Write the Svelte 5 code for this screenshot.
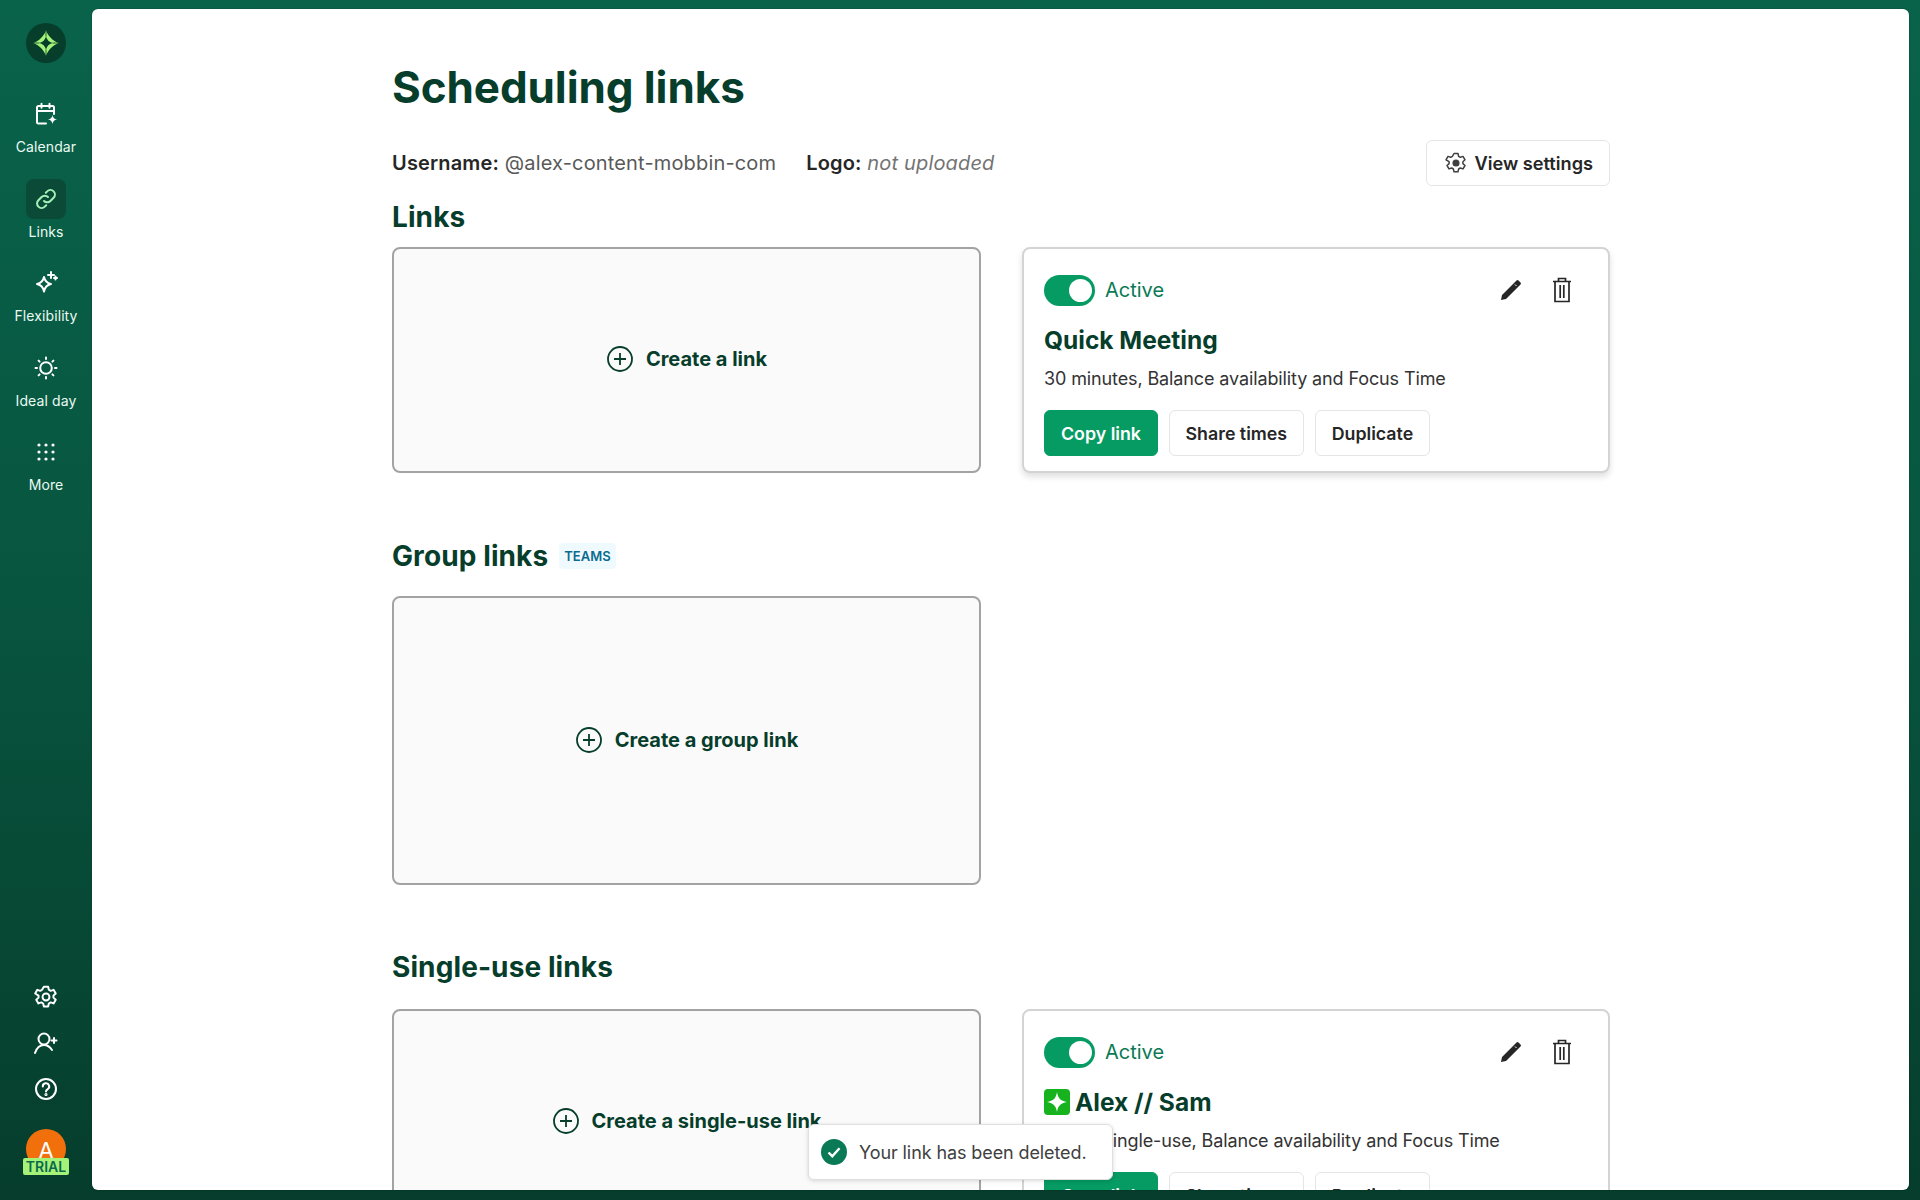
<script>
  const nav = [
    { label: 'Calendar', icon: 'cal' },
    { label: 'Links', icon: 'link', active: true },
    { label: 'Flexibility', icon: 'flex' },
    { label: 'Ideal day', icon: 'sun' },
    { label: 'More', icon: 'more' }
  ];
</script>

{#snippet toggle()}
  <span class="toggle"><span class="knob"></span></span>
{/snippet}

{#snippet pencil()}
  <svg width="24" height="24" viewBox="0 0 24 24" fill="#262626"><path d="M2 22l1-5L17.500 2.500a1.400 1.400 0 0 1 2 0l2 2a1.400 1.400 0 0 1 0 2L7 21z"/><path d="M16 6.500l1.500 1.500" stroke="#fff" stroke-width="1"/></svg>
{/snippet}

{#snippet trash()}
  <svg width="24" height="26" viewBox="0 0 24 26" fill="none" stroke="#262626" stroke-width="1.700"><path d="M3 4.500h18M8.500 4.500V1.500h7v3M5 4.500v20h14v-20M10.200 8v13M13.800 8v13"/></svg>
{/snippet}

{#snippet plus()}
  <svg width="28" height="28" viewBox="0 0 28 28" fill="none" stroke="#063d2b" stroke-width="1.800"><circle cx="14" cy="14" r="12"/><path d="M14 8v12M8 14h12"/></svg>
{/snippet}

{#snippet cardHead()}
  <div class="head">
    <div class="status">{@render toggle()}<span>Active</span></div>
    <div class="tools">{@render pencil()}{@render trash()}</div>
  </div>
{/snippet}

{#snippet actions()}
  <div class="actions">
    <button class="btn primary">Copy link</button>
    <button class="btn">Share times</button>
    <button class="btn">Duplicate</button>
  </div>
{/snippet}

<div class="shell">
  <aside class="side">
    <div class="logo">
      <svg width="30" height="30" viewBox="0 0 30 30">
        <path d="M15 2.200C17 8 22 13 27.800 15 22 17 17 22 15 27.800 13 22 8 17 2.200 15 8 13 13 8 15 2.200z" fill="#a5f278"/>
        <path d="M15 8.500C16 12 18 14 21.500 15 18 16 16 18 15 21.500 14 18 12 16 8.500 15 12 14 14 12 15 8.500z" fill="#063d2b"/>
        <path d="M15 2.200V8.500M15 21.500v6.300M2.200 15H8.500M21.500 15h6.300" stroke="#063d2b" stroke-width=".8"/>
      </svg>
    </div>
    <nav class="nav">
      {#each nav as item}
        <div class="nav-item">
          <div class="nav-icon" class:active={item.active}>
            {#if item.icon === 'cal'}
              <svg width="26" height="26" viewBox="0 0 26 26" fill="none" stroke="#fff" stroke-width="2" stroke-linecap="round"><path d="M13 22.500H5.500A1.500 1.500 0 0 1 4 21V6.500A1.500 1.500 0 0 1 5.500 5h14A1.500 1.500 0 0 1 21 6.500V13M4 10h17M8.500 2.800v4M16.500 2.800v4"/><path d="M19.500 14c.5 2.800 1.500 4 4.500 4.500-3 .5-4 1.700-4.500 4.500-.5-2.800-1.500-4-4.500-4.500 3-.5 4-1.700 4.500-4.500z" fill="#fff" stroke="none"/></svg>
            {:else if item.icon === 'link'}
              <svg width="24" height="24" viewBox="0 0 24 24" fill="none" stroke="#a5f2b8" stroke-width="2" stroke-linecap="round"><path d="M10 14a4.500 4.500 0 0 0 6.400 0l3.200-3.200a4.500 4.500 0 0 0-6.400-6.400l-1.400 1.400"/><path d="M14 10a4.500 4.500 0 0 0-6.400 0l-3.200 3.200a4.500 4.500 0 0 0 6.400 6.400l1.400-1.400"/></svg>
            {:else if item.icon === 'flex'}
              <svg width="26" height="26" viewBox="0 0 26 26" fill="none" stroke="#fff" stroke-width="2" stroke-linejoin="round"><path d="M11 7c.8 4 2.700 6 7 7-4.300 1-6.200 3-7 7.500-.8-4.500-2.700-6.500-7-7.500 4.300-1 6.200-3 7-7z"/><path d="M18 2v6M15 5h6M22.500 6.500v3M21 8h3" stroke-linecap="round"/></svg>
            {:else if item.icon === 'sun'}
              <svg width="26" height="26" viewBox="0 0 26 26" fill="none" stroke="#fff" stroke-width="2" stroke-linecap="round"><circle cx="13" cy="13" r="5.800"/><path d="M13 2.500v1.500M13 22v1.500M2.500 13H4M22 13h1.500M5.600 5.600l1 1M19.400 19.400l1 1M5.600 20.400l1-1M19.400 6.600l1-1"/></svg>
            {:else}
              <svg width="24" height="24" viewBox="0 0 24 24" fill="#fff">
                {#each [5, 12, 19] as y}{#each [5, 12, 19] as x}<circle cx={x} cy={y} r="1.600"/>{/each}{/each}
              </svg>
            {/if}
          </div>
          <span>{item.label}</span>
        </div>
      {/each}
    </nav>
    <div class="bottom">
      <svg width="26" height="26" viewBox="0 0 24 24" fill="none" stroke="#fff" stroke-width="1.800" stroke-linejoin="round"><circle cx="12" cy="12" r="3.200"/><path d="M10 2.500h4l.6 2.800 1.700 1 2.700-.9 2 3.400-2.100 1.900v1.900l2.100 1.900-2 3.400-2.700-.9-1.700 1-.6 2.800h-4l-.6-2.800-1.700-1-2.700.9-2-3.400 2.100-1.900v-1.900L2 8.800l2-3.400 2.700.9 1.700-1z"/></svg>
      <svg width="26" height="26" viewBox="0 0 26 26" fill="none" stroke="#fff" stroke-width="2" stroke-linecap="round"><circle cx="11" cy="9" r="5.500"/><path d="M2 23c1.500-4.500 5-8 9-8s6 2 8 5"/><path d="M21 8v5M18.500 10.500h5"/></svg>
      <svg width="26" height="26" viewBox="0 0 26 26" fill="none" stroke="#fff" stroke-width="2" stroke-linecap="round"><circle cx="13" cy="13" r="10"/><path d="M9.800 10.500a3.200 3.200 0 1 1 4.700 2.800c-1 .6-1.500 1.200-1.500 2.200"/><circle cx="13" cy="18.500" r=".6"/></svg>
    </div>
    <div class="avatar">
      <span class="letter">A</span>
      <span class="trial">TRIAL</span>
    </div>
  </aside>

  <main class="panel">
    <div class="content">
      <h1>Scheduling links</h1>
      <div class="meta">
        <p><b>Username:</b> <span class="muted">@alex-content-mobbin-com</span></p>
        <p><b>Logo:</b> <em>not uploaded</em></p>
        <button class="btn settings">
          <svg width="24" height="24" viewBox="0 0 24 24" fill="none" stroke="#404040" stroke-width="1.500" stroke-linejoin="round"><circle cx="12" cy="12" r="2.800" fill="#404040"/><path d="M10 2.500h4l.6 2.800 1.700 1 2.700-.9 2 3.400-2.100 1.900v1.900l2.100 1.900-2 3.400-2.700-.9-1.700 1-.6 2.800h-4l-.6-2.800-1.700-1-2.700.9-2-3.400 2.100-1.900v-1.900L2 8.800l2-3.400 2.700.9 1.700-1z"/></svg>
          View settings
        </button>
      </div>

      <h2 class="links-title">Links</h2>
      <section class="grid first">
        <div class="create h226">{@render plus()}<span>Create a link</span></div>
        <article class="card shadow">
          {@render cardHead()}
          <h3>Quick Meeting</h3>
          <p class="desc">30 minutes, Balance availability and Focus Time</p>
          {@render actions()}
        </article>
      </section>

      <div class="title-row">
        <h2>Group links</h2>
        <span class="badge">TEAMS</span>
      </div>
      <section class="grid second">
        <div class="create h289">{@render plus()}<span>Create a group link</span></div>
      </section>

      <h2 class="single-title">Single-use links</h2>
      <section class="grid third">
        <div class="create h226">{@render plus()}<span>Create a single-use link</span></div>
        <article class="card">
          {@render cardHead()}
          <h3 class="with-emoji">
            <svg width="26" height="26" viewBox="0 0 26 26"><rect width="26" height="26" rx="4" fill="#16b31e"/><path d="M13 3c.9 6 3.500 9 10 10-6.500 1-9.100 4-10 10-.9-6-3.500-9-10-10 6.500-1 9.100-4 10-10z" fill="#fff"/></svg>
            Alex // Sam
          </h3>
          <p class="desc">1 hour, single-use, Balance availability and Focus Time</p>
          {@render actions()}
        </article>
      </section>
    </div>

    <div class="toast">
      <svg width="26" height="26" viewBox="0 0 26 26"><circle cx="13" cy="13" r="13" fill="#097a55"/><path d="M7.500 13.500l3.800 3.700 7.200-8" fill="none" stroke="#fff" stroke-width="2.400"/></svg>
      <span>Your link has been deleted.</span>
    </div>
  </main>
</div>

<style>
  :global(body) {
    margin: 0;
    font-family: Inter, "Liberation Sans", sans-serif;
  }
  .shell {
    display: flex;
    height: 1200px;
    box-sizing: border-box;
    padding: 9px 11px 10px 0;
    overflow: hidden;
    background: linear-gradient(180deg, #09634a 0%, #08553f 50%, #063d2c 100%);
  }
  .side {
    width: 92px;
    flex: none;
    display: flex;
    flex-direction: column;
    align-items: center;
    color: #fff;
  }
  .logo {
    width: 40px;
    height: 40px;
    margin-top: 14px;
    border-radius: 50%;
    background: #063d2b;
    display: flex;
    align-items: center;
    justify-content: center;
  }
  .nav {
    margin-top: 31px;
    display: flex;
    flex-direction: column;
    gap: 4.500px;
  }
  .nav-item {
    width: 92px;
    height: 80px;
    display: flex;
    flex-direction: column;
    align-items: center;
    gap: 4px;
    font-size: 14px;
    line-height: 18px;
    letter-spacing: 0.1px;
    color: #e9fbf2;
  }
  .nav-icon {
    width: 40px;
    height: 40px;
    flex: none;
    border-radius: 8px;
    display: flex;
    align-items: center;
    justify-content: center;
  }
  .nav-icon.active {
    background: #0a4a36;
  }
  .bottom {
    margin-top: auto;
    display: flex;
    flex-direction: column;
    align-items: center;
    gap: 20px;
  }
  .avatar {
    position: relative;
    width: 40px;
    height: 40px;
    margin: 27px 0 21px;
    border-radius: 50%;
    background: #f2700c;
    text-align: center;
    font-size: 22px;
    line-height: 42px;
    color: #fff;
  }
  .letter {
    display: block;
  }
  .trial {
    position: absolute;
    left: -3px;
    bottom: -6px;
    width: 46px;
    height: 17px;
    border-radius: 2px;
    background: #a5f278;
    color: #0a6a4c;
    font-size: 14px;
    font-weight: 600;
    line-height: 17px;
  }
  .panel {
    position: relative;
    flex: 1;
    background: #fff;
    border-radius: 6px;
    overflow: hidden;
    box-shadow: 0 0 2px rgba(0, 0, 0, 0.3);
  }
  .content {
    width: 1218px;
    margin-left: 300px;
    padding-top: 50px;
  }
  h1, h2, h3 {
    margin: 0;
    color: #063d2b;
    font-weight: 700;
  }
  h1 {
    font-size: 44px;
    line-height: 56px;
    letter-spacing: -0.1px;
  }
  h2 {
    font-size: 28px;
    line-height: 36px;
    letter-spacing: 0.1px;
  }
  h3 {
    font-size: 24.500px;
    line-height: 32px;
  }
  .meta {
    display: flex;
    align-items: center;
    gap: 30px;
    margin-top: 25px;
    height: 46px;
    font-size: 20px;
    letter-spacing: 0.16px;
    color: #262626;
  }
  .meta p {
    margin: 0;
  }
  .meta b {
    font-weight: 600;
  }
  .muted {
    color: #595959;
  }
  em {
    color: #737373;
  }
  .btn {
    height: 46px;
    padding: 0 16px;
    border: 1px solid #e5e5e5;
    border-radius: 6px;
    background: #fff;
    color: #262626;
    font: 600 17.800px Inter, "Liberation Sans", sans-serif;
    letter-spacing: 0;
    white-space: nowrap;
  }
  .primary {
    background: #059b63;
    border-color: #059b63;
    color: #fff;
  }
  .settings {
    margin-left: auto;
    display: flex;
    align-items: center;
    gap: 6px;
    padding: 0 16px 0 17px;
    font-size: 18.200px;
  }
  .links-title {
    margin-top: 13px;
  }
  .grid {
    display: grid;
    grid-template-columns: 589px 588px;
    gap: 41px;
    align-items: start;
  }
  .first { margin-top: 12px; }
  .second { margin-top: 22px; }
  .third { margin-top: 24px; }
  .create {
    box-sizing: border-box;
    display: flex;
    align-items: center;
    justify-content: center;
    gap: 12px;
    padding-bottom: 2px;
    border: 2px solid #a3a3a3;
    border-radius: 8px;
    background: #fafafa;
    color: #063d2b;
    font-size: 20px;
    font-weight: 700;
  }
  .h226 { height: 226px; }
  .h289 { height: 289px; }
  .card {
    box-sizing: border-box;
    height: 226px;
    padding: 25px 20px 0;
    border: 2px solid #d4d4d4;
    border-radius: 8px;
    background: #fff;
  }
  .shadow {
    box-shadow: 0 4px 6px rgba(0, 0, 0, 0.12);
  }
  .head {
    display: flex;
    justify-content: space-between;
    align-items: center;
    height: 32px;
  }
  .status {
    display: flex;
    align-items: center;
    gap: 10px;
    font-size: 20px;
    color: #097a55;
  }
  .toggle {
    box-sizing: border-box;
    width: 51px;
    height: 31px;
    border-radius: 16px;
    background: #059b63;
    padding: 4px 3px;
    display: flex;
    justify-content: flex-end;
  }
  .knob {
    width: 23px;
    height: 23px;
    border-radius: 50%;
    background: #fff;
  }
  .tools {
    display: flex;
    align-items: center;
    gap: 27px;
    margin-right: 14px;
  }
  .card h3 {
    margin-top: 18px;
  }
  .with-emoji {
    display: flex;
    align-items: center;
    gap: 5px;
  }
  .desc {
    margin: 11px 0 0;
    font-size: 18px;
    line-height: 24px;
    letter-spacing: -0.12px;
    color: #333;
  }
  .actions {
    display: flex;
    gap: 10.600px;
    margin-top: 19px;
  }
  .title-row {
    display: flex;
    align-items: center;
    gap: 11px;
    margin-top: 65px;
  }
  .badge {
    padding: 4px 5px;
    border-radius: 4px;
    background: #effaff;
    color: #0a6b8f;
    font-size: 13px;
    line-height: 18px;
    font-weight: 600;
  }
  .single-title {
    margin-top: 64px;
  }
  .toast {
    position: absolute;
    left: 716px;
    top: 1115px;
    box-sizing: border-box;
    width: 305px;
    height: 56px;
    padding: 0 16px 0 12px;
    display: flex;
    align-items: center;
    gap: 12px;
    border: 1px solid #e0e0e0;
    border-radius: 6px;
    background: #fff;
    box-shadow: 0 1px 4px rgba(0, 0, 0, 0.15);
    font-size: 18px;
    letter-spacing: -0.1px;
    color: #404040;
    white-space: nowrap;
  }
</style>
